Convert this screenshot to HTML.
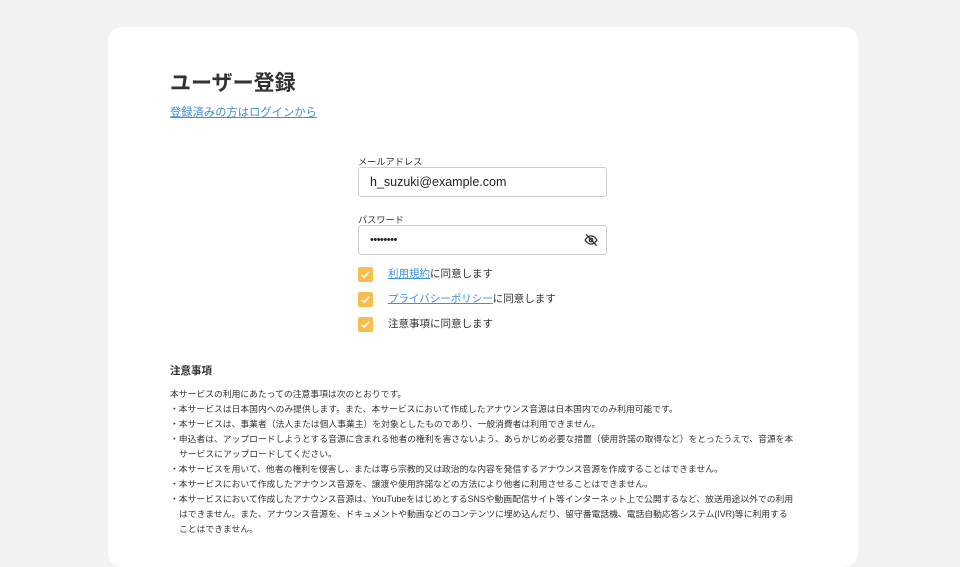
<!DOCTYPE html>
<html><head><meta charset="utf-8"><style>
*{box-sizing:border-box;margin:0;padding:0}
body{width:960px;height:540px;background:#f2f2f2;font-family:"Liberation Sans","Noto Sans CJK JP",sans-serif;color:#333;overflow:hidden;position:relative}
.card{position:absolute;left:108px;top:27px;width:750px;height:540px;background:#fff;border-radius:14px}
h1{position:absolute;left:170px;top:70px;font-size:21px;font-weight:bold;color:#333;line-height:28px}
a{color:#3d8fe0;text-decoration:underline}
.login{position:absolute;left:170px;top:105px;font-size:11.3px;line-height:16px}
.lbl{position:absolute;left:358px;font-size:9.2px;color:#333}
.inp{position:absolute;left:358px;width:249px;height:30px;border:1px solid #ccc;border-radius:3px;font-size:12.5px;padding-left:11px;line-height:28px;color:#222}
.cb{position:absolute;left:358px;width:15px;height:15px;background:#f9bd4e;border-radius:2px}
.cb svg{position:absolute;left:2px;top:2px}
.ct{position:absolute;left:388px;font-size:10.5px;line-height:15px;color:#333}
h2{position:absolute;left:170px;top:363px;font-size:10.5px;font-weight:bold}
.notes{position:absolute;left:170px;top:387px;width:626px;font-size:8.8px;line-height:15px;color:#333}
.notes p{padding-left:9px;text-indent:-9px}
.notes p.f{padding-left:0;text-indent:0}
</style></head><body>
<div class="card"></div>
<h1>ユーザー登録</h1>
<a class="login">登録済みの方はログインから</a>
<div class="lbl" style="top:154px">メールアドレス</div>
<div class="inp" style="top:167px">h_suzuki@example.com</div>
<div class="lbl" style="top:212px">パスワード</div>
<div class="inp" style="top:225px;font-size:11px;letter-spacing:-0.5px">••••••••
<svg style="position:absolute;right:8px;top:7px" width="14" height="14" viewBox="0 0 24 24" fill="none" stroke="#333" stroke-width="2.2" stroke-linecap="round"><path d="M2 12s4-7 10-7 10 7 10 7-4 7-10 7S2 12 2 12z"/><circle cx="12" cy="12" r="3"/><path d="M4 3l17 18"/></svg></div>
<div class="cb" style="top:267px"><svg width="11" height="11" viewBox="0 0 12 12"><path d="M2 6.5l2.5 2.5L10 3" fill="none" stroke="#fff" stroke-width="1.6"/></svg></div>
<div class="ct" style="top:267px"><a>利用規約</a>に同意します</div>
<div class="cb" style="top:292px"><svg width="11" height="11" viewBox="0 0 12 12"><path d="M2 6.5l2.5 2.5L10 3" fill="none" stroke="#fff" stroke-width="1.6"/></svg></div>
<div class="ct" style="top:292px"><a>プライバシーポリシー</a>に同意します</div>
<div class="cb" style="top:317px"><svg width="11" height="11" viewBox="0 0 12 12"><path d="M2 6.5l2.5 2.5L10 3" fill="none" stroke="#fff" stroke-width="1.6"/></svg></div>
<div class="ct" style="top:317px">注意事項に同意します</div>
<h2>注意事項</h2>
<div class="notes">
<p class="f">本サービスの利用にあたっての注意事項は次のとおりです。</p>
<p>・本サービスは日本国内へのみ提供します。また、本サービスにおいて作成したアナウンス音源は日本国内でのみ利用可能です。</p>
<p>・本サービスは、事業者（法人または個人事業主）を対象としたものであり、一般消費者は利用できません。</p>
<p>・申込者は、アップロードしようとする音源に含まれる他者の権利を害さないよう、あらかじめ必要な措置（使用許諾の取得など）をとったうえで、音源を本サービスにアップロードしてください。</p>
<p>・本サービスを用いて、他者の権利を侵害し、または専ら宗教的又は政治的な内容を発信するアナウンス音源を作成することはできません。</p>
<p>・本サービスにおいて作成したアナウンス音源を、譲渡や使用許諾などの方法により他者に利用させることはできません。</p>
<p>・本サービスにおいて作成したアナウンス音源は、YouTubeをはじめとするSNSや動画配信サイト等インターネット上で公開するなど、放送用途以外での利用はできません。また、アナウンス音源を、ドキュメントや動画などのコンテンツに埋め込んだり、留守番電話機、電話自動応答システム(IVR)等に利用することはできません。</p>
</div>
</body></html>
